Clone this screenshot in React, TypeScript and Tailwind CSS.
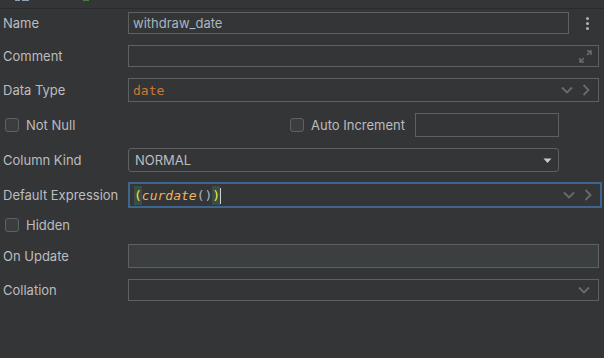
import React from "react";

const labelCls = "w-[128px] shrink-0 pl-[3px] pt-[2px] text-[13px] text-[#bbbdbf]";
const boxCls = "border border-[#5e6062] bg-[#343537]";

function Chevrons({ right = true }: { right?: boolean }) {
  return (
    <div className="flex items-center gap-[9px] pr-[8px]">
      <svg width="12" height="8" viewBox="0 0 12 8">
        <path d="M1 1.5l5 5 5-5" fill="none" stroke="#696c6f" strokeWidth="1.8" />
      </svg>
      {right && (
        <svg width="8" height="12" viewBox="0 0 8 12">
          <path d="M1.5 1l5 5-5 5" fill="none" stroke="#696c6f" strokeWidth="1.8" />
        </svg>
      )}
    </div>
  );
}

function Checkbox({ label }: { label: string }) {
  return (
    <div className="flex items-center gap-[7px]">
      <div className="w-[14px] h-[14px] rounded-[3px] border border-[#5e6264] bg-[#3a3e3e]" />
      <span className="text-[13px] text-[#bbbdbf] pt-[1px]">{label}</span>
    </div>
  );
}

export default function App() {
  return (
    <div
      className="w-[604px] h-[358px] bg-[#343537] overflow-hidden"
      style={{ fontFamily: "Inter, 'Noto Sans', sans-serif" }}
    >
      {/* clipped toolbar strip */}
      <div className="h-[9px] border-b border-[#2a2b2c] flex items-start">
        <div className="ml-[15px] w-[5px] h-[1px] bg-[#8fa3b8]" />
        <div className="ml-[2px] w-[7px] h-[1px] bg-[#8fa3b8]" />
        <div className="ml-[54px] w-[6px] h-[1px] bg-[#4e7a3a]" />
      </div>

      {/* Name */}
      <div className="mt-[3px] flex items-center h-[22px]">
        <div className={labelCls}>Name</div>
        <div className={`${boxCls} w-[441px] h-[22px] flex items-center pl-[4px] pt-[1px] text-[13px] text-[#a9b5c2]`}>
          withdraw_date
        </div>
        <div className="ml-[17px] flex flex-col gap-[2px]">
          <div className="w-[3px] h-[3px] rounded-full bg-[#b0b3b6]" />
          <div className="w-[3px] h-[3px] rounded-full bg-[#b0b3b6]" />
          <div className="w-[3px] h-[3px] rounded-full bg-[#b0b3b6]" />
        </div>
      </div>

      {/* Comment */}
      <div className="mt-[11px] flex items-center h-[22px]">
        <div className={labelCls}>Comment</div>
        <div className={`${boxCls} w-[471px] h-[22px] flex items-center justify-end pr-[6px]`}>
          <svg width="13" height="13" viewBox="0 0 13 13">
            <path d="M8 1h4v4M12 1L8 5M5 12H1V8M1 12l4-4" fill="none" stroke="#6a6d70" strokeWidth="1.5" />
          </svg>
        </div>
      </div>

      {/* Data Type */}
      <div className="mt-[11px] flex items-center h-[24px]">
        <div className={labelCls}>Data Type</div>
        <div className={`${boxCls} w-[471px] h-[24px] flex items-center justify-between pl-[4px]`}>
          <span className="text-[13px] text-[#cc7832] pt-[1px]" style={{ fontFamily: "'DejaVu Sans Mono', monospace" }}>
            date
          </span>
          <Chevrons />
        </div>
      </div>

      {/* Not Null / Auto Increment */}
      <div className="mt-[11px] flex items-center h-[24px]">
        <div className="w-[290px] shrink-0 pl-[5px]">
          <Checkbox label="Not Null" />
        </div>
        <div className="w-[125px] shrink-0">
          <Checkbox label="Auto Increment" />
        </div>
        <div className={`${boxCls} w-[144px] h-[24px]`} />
      </div>

      {/* Column Kind */}
      <div className="mt-[11px] flex items-center h-[24px]">
        <div className={labelCls}>Column Kind</div>
        <div className={`${boxCls} rounded-[3px] w-[431px] h-[24px] flex items-center justify-between pl-[6px] pr-[6px] pt-[1px] text-[13px] text-[#bbbdbf]`}>
          NORMAL
          <svg width="9" height="6" viewBox="0 0 9 6">
            <path d="M0.5 0.5h8L4.5 5z" fill="#c9cbcd" />
          </svg>
        </div>
      </div>

      {/* Default Expression */}
      <div className="mt-[10px] flex items-center h-[26px]">
        <div className={`${labelCls} w-[127px]`}>Default Expression</div>
        <div className="border-2 border-[#3d6590] bg-[#343537] w-[474px] h-[26px] flex items-center justify-between pl-[4px]">
          <div className="flex items-center text-[13px] h-[18px] pt-[1px]" style={{ fontFamily: "'DejaVu Sans Mono', monospace" }}>
            <span className="text-[#f5e83a] bg-[#3b4d47]">(</span>
            <span className="text-[#efb45b] italic">curdate</span>
            <span className="text-[#a9b5c2]">()</span>
            <span className="text-[#f5e83a] bg-[#3b4d47]">)</span>
            <span className="w-[1px] h-[16px] bg-[#cfd1d3]" />
          </div>
          <Chevrons />
        </div>
      </div>

      {/* Hidden */}
      <div className="mt-[8px] h-[18px] flex items-center pl-[5px]">
        <Checkbox label="Hidden" />
      </div>

      {/* On Update */}
      <div className="mt-[10px] flex items-center h-[24px]">
        <div className={labelCls}>On Update</div>
        <div className="border border-[#5e6062] bg-[#3c3f40] w-[471px] h-[24px]" />
      </div>

      {/* Collation */}
      <div className="mt-[11px] flex items-center h-[22px]">
        <div className={labelCls}>Collation</div>
        <div className={`${boxCls} w-[471px] h-[22px] flex items-center justify-end`}>
          <Chevrons right={false} />
        </div>
      </div>
    </div>
  );
}
